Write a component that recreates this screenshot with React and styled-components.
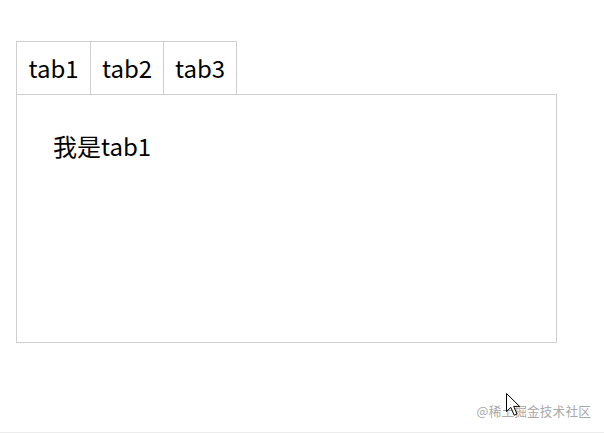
import { useState } from 'react';
import styled, { createGlobalStyle } from 'styled-components';

const GlobalStyle = createGlobalStyle`
  html, body {
    margin: 0;
    padding: 0;
    background: #fff;
  }
  body {
    font-family: "Noto Sans CJK SC", "Noto Sans", sans-serif;
    color: #000;
  }
`;

const Page = styled.div`
  position: relative;
  width: 604px;
  height: 433px;
  box-sizing: border-box;
  padding: 41px 0 0 16px;
  border-bottom: 1px solid #ececec;
  overflow: hidden;
`;

const TabBar = styled.div`
  display: flex;
`;

const Tab = styled.div`
  width: ${props => (props.first ? '73px' : '72px')};
  height: 52px;
  line-height: 52px;
  text-align: center;
  font-size: 24px;
  border: 1px solid #cfcfcf;
  border-bottom: none;
  border-left: ${props => (props.first ? '1px solid #cfcfcf' : 'none')};
  background: #fff;
  cursor: pointer;
  user-select: none;
`;

const Panel = styled.div`
  width: 541px;
  height: 249px;
  box-sizing: border-box;
  border: 1px solid #cfcfcf;
  padding: 33px 36px;
  font-size: 24px;
  line-height: 36px;
`;

const Watermark = styled.div`
  position: absolute;
  right: 13px;
  bottom: 12px;
  font-size: 12.6px;
  color: #a8a8a8;
  letter-spacing: 0.2px;
`;

const Cursor = styled.svg`
  position: absolute;
  left: 506px;
  top: 393px;
`;

const tabs = ['tab1', 'tab2', 'tab3'];

export default function App() {
  const [active, setActive] = useState(0);

  return (
    <>
      <GlobalStyle />
      <Page>
        <TabBar>
          {tabs.map((name, i) => (
            <Tab
              key={name}
              first={i === 0}
              onClick={() => setActive(i)}
            >
              {name}
            </Tab>
          ))}
        </TabBar>
        <Panel>我是{tabs[active]}</Panel>
        <Watermark>@稀土掘金技术社区</Watermark>
        <Cursor width="18" height="26" viewBox="0 0 18 26">
          <path
            d="M0.5 0.5 L0.5 18.5 L4.8 14.4 L8.2 22.2 L11 21 L7.7 13.4 L13.6 13.4 Z"
            fill="#fff"
            stroke="#000"
            strokeWidth="1"
            strokeLinejoin="round"
          />
        </Cursor>
      </Page>
    </>
  );
}
